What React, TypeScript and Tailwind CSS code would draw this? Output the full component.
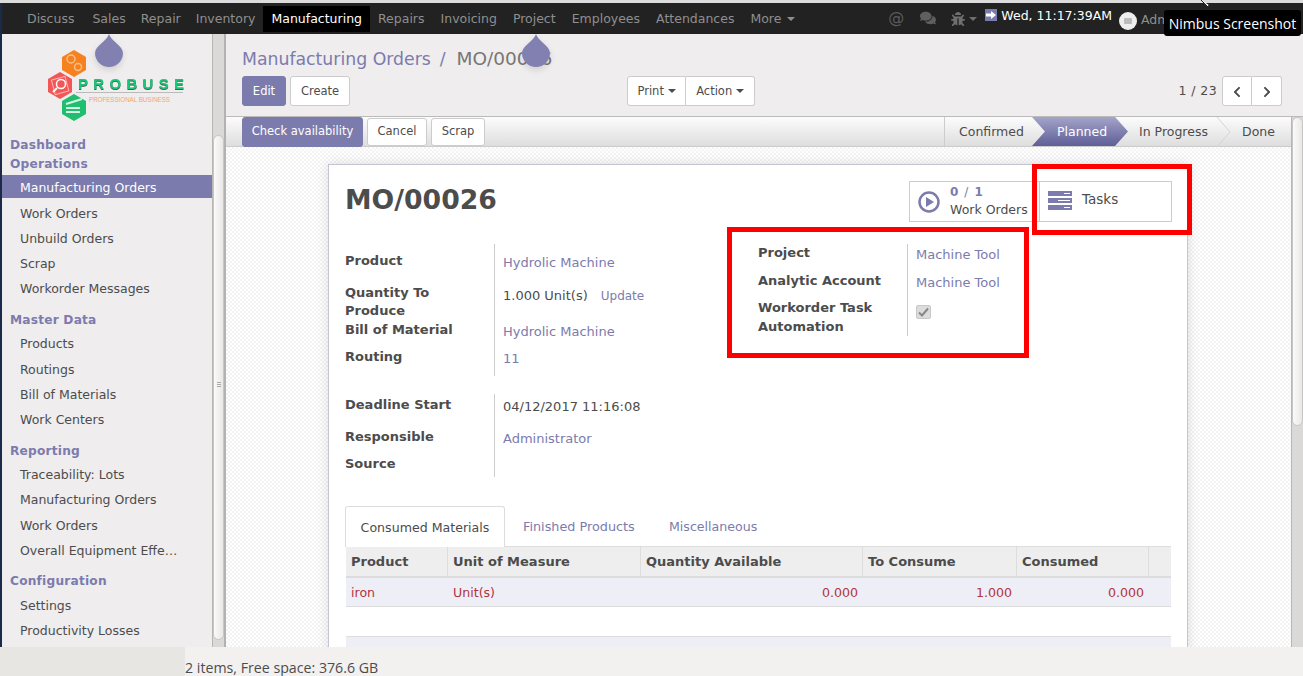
import React from 'react';
import { FaBug, FaChevronLeft, FaChevronRight, FaComments } from 'react-icons/fa';

const font = "font-['DejaVu_Sans',sans-serif]";

const navItems = ['Discuss', 'Sales', 'Repair', 'Inventory', 'Manufacturing', 'Repairs', 'Invoicing', 'Project', 'Employees', 'Attendances'];

const navPad: Record<string, string> = {
  Discuss: 'pl-2 pr-[10px]',
  Sales: 'pl-2 pr-[7px]',
  Repair: 'pl-2 pr-[7px]',
};

const Caret = ({ className = 'border-t-[#8f8f8f]' }: { className?: string }) => (
  <span className={`inline-block w-0 h-0 border-x-4 border-t-4 border-x-transparent align-middle ${className}`} />
);

const Drop = ({ className }: { className: string }) => (
  <svg className={`absolute top-[33px] drop-shadow-md ${className}`} width="30" height="35" viewBox="0 0 30 35">
    <path d="M15 1 C17 8 29 13 29 20 A14 14 0 0 1 1 20 C1 13 13 8 15 1Z" fill="#8180b0" />
  </svg>
);

const Logo = () => (
  <svg width="150" height="76" viewBox="0 0 150 76" className="block">
    <polygon points="26,1 38,8 38,21 26,28 14,21 14,8" fill="#f5821f" />
    <circle cx="23" cy="10" r="4" fill="none" stroke="#fbbf85" strokeWidth="1.5" />
    <circle cx="30" cy="18" r="3.5" fill="none" stroke="#fbbf85" strokeWidth="1.5" />
    <polygon points="12,23 24,30 24,43 12,50 0,43 0,30" fill="#f25757" />
    <rect x="5" y="29" width="14" height="15" fill="none" stroke="#ffb3b3" strokeWidth="1" transform="rotate(-15 12 36)" />
    <circle cx="13" cy="35" r="4.5" fill="none" stroke="#fff" strokeWidth="1.5" />
    <line x1="9" y1="39" x2="5" y2="43" stroke="#fff" strokeWidth="2" />
    <polygon points="26,45 38,52 38,65 26,72 14,65 14,52" fill="#1fbf6f" />
    <path d="M18 55 L34 50 M18 59 H32 M18 63 H32" stroke="#d6f5e5" strokeWidth="2" />
    <text x="30" y="40" fill="#18c878" fontSize="15" fontWeight="700" letterSpacing="5.3" className="font-['Liberation_Sans',sans-serif] [filter:drop-shadow(0_1px_0_#555)]">PROBUSE</text>
    <line x1="28" y1="43.5" x2="135" y2="43.5" stroke="#bbb" strokeWidth="1" />
    <text x="41" y="53" textLength="81" lengthAdjust="spacingAndGlyphs" fill="#f5a85a" fontSize="7.5" className="font-['Liberation_Sans',sans-serif]">PROFESSIONAL BUSINESS</text>
  </svg>
);

const SideHead = ({ children, className = '' }: { children: React.ReactNode; className?: string }) => (
  <div className={`h-[19px] leading-[21px] pl-[8px] text-[#7c7bad] font-bold text-[12.2px] tracking-[0.2px] ${className}`}>{children}</div>
);

const SideItem = ({ children, className = '' }: { children: React.ReactNode; className?: string }) => (
  <div className={`h-[25px] leading-[25px] pl-[18px] text-[#4c4c4c] text-[12.5px] whitespace-nowrap ${className}`}>{children}</div>
);

const Btn = ({ children, className = '' }: { children: React.ReactNode; className?: string }) => (
  <button className={`h-[30px] pt-[1px] bg-white border border-[#ccc] rounded-[3px] text-[11.5px] text-[#4c4c4c] ${className}`}>{children}</button>
);

const Row = ({ label, value, h, lt = 0, vt = 2, link = true, w = 'w-[149px]' }: { label: React.ReactNode; value?: React.ReactNode; h: number; lt?: number; vt?: number; link?: boolean; w?: string }) => (
  <div className="flex" style={{ height: h }}>
    <div className={`${w} shrink-0 font-bold text-[#4c4c4c] leading-[18px] pr-2`} style={{ paddingTop: lt }}>{label}</div>
    <div className={`flex-1 border-l border-[#ccc] pl-[8px] leading-[18px] whitespace-nowrap ${link ? 'text-[#7c7bad]' : 'text-[#4c4c4c]'}`} style={{ paddingTop: vt }}>{value}</div>
  </div>
);

export default function App() {
  return (
    <div className={`relative h-[676px] w-[1303px] overflow-hidden flex flex-col bg-[#f2f1f0] ${font} text-[13px]`}>
      <div className="h-[3px] bg-[#dcdcdc] shrink-0" />
      <div className="flex-1 min-h-0 flex bg-[#1c2a4a] pl-[2px]">
        <div className="flex-1 min-w-0 flex flex-col bg-[#efedee]">
          {/* top nav */}
          <nav className="h-[31px] shrink-0 bg-[#222] flex items-center pl-[17px] pt-[1px] text-[#8f8f8f] text-[12.5px]">
            {navItems.map(n => (
              <div key={n} className={n === 'Manufacturing' ? 'h-[26px] leading-[26px] px-2 bg-black text-white' : `${navPad[n] ?? 'px-2'} leading-[26px]`}>{n}</div>
            ))}
            <div className="px-2 whitespace-nowrap">More <Caret className="border-t-[#8f8f8f] ml-[2px]" /></div>
            <div className="ml-auto flex items-center pr-[139px] h-full">
              <span className="text-[16px] text-[#5a5a5a] mr-[16px] -mt-[3px]">@</span>
              <FaComments size={16} color="#5f5f5f" className="mr-[15px] -mt-[3px]" />
              <FaBug size={14} color="#6f6f6f" className="mr-[4px]" />
              <Caret className="border-t-[#6f6f6f] mr-[8px]" />
              <div className="flex items-start self-start pt-[4px] text-white leading-[16px] whitespace-nowrap">
                <svg width="12" height="12" viewBox="0 0 12 12" className="mr-[4px] mt-[1px]">
                  <rect width="12" height="12" fill="#7c7bad" />
                  <path d="M1 4.5h5V2l5 4-5 4V7.5H1z" fill="#fff" />
                </svg>
                Wed, 11:17:39AM
              </div>
              <span className="w-[18px] h-[18px] rounded-full bg-[#eee] ml-[7px] mr-[4px] mt-[3px] flex items-center justify-center">
                <span className="w-[8px] h-[6px] bg-[#bbb] rounded-[1px]" />
              </span>
              <span className="text-[#8f8f8f] mt-[3px] w-[23px] overflow-hidden">Adm</span>
            </div>
          </nav>

          <div className="flex-1 min-h-0 flex">
            {/* sidebar */}
            <aside className="w-[224px] shrink-0 flex">
              <div className="w-[210px] shrink-0">
                <div className="h-[101px] pl-[46px] pt-[15px]"><Logo /></div>
                <SideHead>Dashboard</SideHead>
                <SideHead className="mb-[2px]">Operations</SideHead>
                <div className="h-[23px] leading-[25px] pl-[18px] bg-[#7c7bad] text-white text-[12.5px] mb-[3px]">Manufacturing Orders</div>
                <SideItem>Work Orders</SideItem>
                <SideItem>Unbuild Orders</SideItem>
                <SideItem>Scrap</SideItem>
                <SideItem>Workorder Messages</SideItem>
                <SideHead className="mt-[9px] mb-[2px]">Master Data</SideHead>
                <SideItem className="mb-[1px]">Products</SideItem>
                <SideItem>Routings</SideItem>
                <SideItem>Bill of Materials</SideItem>
                <SideItem>Work Centers</SideItem>
                <SideHead className="mt-[9px] mb-[2px]">Reporting</SideHead>
                <SideItem>Traceability: Lots</SideItem>
                <SideItem className="mb-[1px]">Manufacturing Orders</SideItem>
                <SideItem>Work Orders</SideItem>
                <SideItem>Overall Equipment Effe…</SideItem>
                <SideHead className="mt-[8px] mb-[3px]">Configuration</SideHead>
                <SideItem>Settings</SideItem>
                <SideItem>Productivity Losses</SideItem>
              </div>
              <div className="flex-1 flex bg-[#dbd9d7] border-l border-[#b8b6b4] pt-[101px]">
                <div className="flex-1 h-[505px] bg-gradient-to-r from-[#fbfaf9] to-[#e9e8e6] border border-[#c8c6c4] rounded-full flex flex-col items-center pt-[246px] gap-[1px]">
                  <span className="w-[4px] h-[1px] bg-[#aaa]" />
                  <span className="w-[4px] h-[1px] bg-[#aaa]" />
                  <span className="w-[4px] h-[1px] bg-[#aaa]" />
                </div>
                <div className="w-[2px] bg-[#b4b2b0] -mt-[101px]" />
              </div>
            </aside>

            {/* main */}
            <main className="flex-1 min-w-0 flex flex-col">
              <div className="h-[83px] shrink-0 px-[16px] pt-[13px] border-b border-[#bbb]">
                <div className="text-[17.3px] leading-[24px] whitespace-nowrap">
                  <span className="text-[#7c7bad]">Manufacturing Orders</span>
                  <span className="text-[#7c7bad] ml-[9px]">/</span>
                  <span className="text-[#777] text-[18.5px] ml-[11px]">MO/00026</span>
                </div>
                <div className="flex mt-[5px] relative">
                  <Btn className="!bg-[#7c7bad] !border-[#7c7bad] !text-white w-[44px]">Edit</Btn>
                  <Btn className="w-[60px] ml-[4px]">Create</Btn>
                  <div className="flex ml-[277px]">
                    <Btn className="w-[59px] rounded-r-none">Print <Caret className="border-t-[#4c4c4c]" /></Btn>
                    <Btn className="w-[69px] rounded-l-none border-l-0">Action <Caret className="border-t-[#4c4c4c]" /></Btn>
                  </div>
                  <div className="flex items-center ml-auto mr-[5px]">
                    <span className="text-[#4c4c4c] text-[12.5px] mr-[5px] tracking-[0.4px]">1 / 23</span>
                    <Btn className="w-[30px] rounded-r-none flex items-center justify-center"><FaChevronLeft size={12} color="#4c4c4c" /></Btn>
                    <Btn className="w-[30px] rounded-l-none border-l-0 flex items-center justify-center"><FaChevronRight size={12} color="#4c4c4c" /></Btn>
                  </div>
                </div>
              </div>

              <div className="flex-1 min-h-0 flex">
                <div className="flex-1 min-w-0 flex flex-col">
                  {/* status bar */}
                  <div className="h-[30px] shrink-0 flex items-center pl-[16px] bg-gradient-to-b from-[#fcfcfc] to-[#dedede] border-b border-[#ccc]">
                    <Btn className="!bg-[#7c7bad] !border-[#7c7bad] !text-white w-[121px]">Check availability</Btn>
                    <Btn className="w-[60px] ml-[4px] !h-[28px]">Cancel</Btn>
                    <Btn className="w-[54px] ml-[4px] !h-[28px]">Scrap</Btn>
                    <div className="ml-auto flex h-full text-[#4c4c4c] text-[12.5px] border-l border-[#ccc]">
                      <div className="w-[87px] pl-[14px] leading-[29px]">Confirmed</div>
                      <div className="w-[96px] pl-[25px] leading-[29px] text-white bg-gradient-to-b from-[#a5a4c9] to-[#5f5e97] [clip-path:polygon(0_100%,13.5%_50%,0_0,86.5%_0,100%_50%,86.5%_100%)]">Planned</div>
                      <div className="relative w-[103px] pl-[11px] leading-[29px] whitespace-nowrap">In Progress
                        <svg className="absolute right-0 top-0" width="15" height="30" viewBox="0 0 15 30"><path d="M1 0l13 15L1 30" fill="none" stroke="#d4d4d4" /></svg>
                      </div>
                      <div className="w-[60px] pl-[11px] leading-[29px]">Done</div>
                    </div>
                  </div>
                  {/* sheet */}
                  <div className="flex-1 min-h-0 overflow-hidden pl-[102px] pt-[17px] pr-[103px] bg-[#fbfbfb] [background-image:repeating-conic-gradient(#f3f3f3_0_25%,#ffffff_0_50%)] [background-size:4px_4px]">
                    <div className="relative h-[600px] bg-white border border-[#c4c4d2] shadow-[0_0_12px_rgba(0,0,0,0.12)] px-[16px]">
                      <div className="flex justify-end pt-[16px] h-[79px] relative -mr-[1px]">
                        <h1 className="absolute left-0 top-[18px] text-[26.7px] leading-[34px] font-bold text-[#4c4c4c]">MO/00026</h1>
                        <div className="w-[131px] h-[41px] border border-[#ccc] flex items-center pl-[8px]">
                          <svg width="22" height="22" viewBox="0 0 22 22" className="mr-[10px] shrink-0">
                            <circle cx="11" cy="11" r="9.5" fill="none" stroke="#7c7bad" strokeWidth="2.5" />
                            <path d="M8 6l8 5-8 5z" fill="#7c7bad" />
                          </svg>
                          <div className="leading-[18px] pb-[2px]">
                            <div className="text-[#7c7bad] font-bold text-[12px]">0<span className="font-normal mx-[6px]">/</span>1</div>
                            <div className="text-[#4c4c4c] text-[12.5px] whitespace-nowrap">Work Orders</div>
                          </div>
                        </div>
                        <div className="w-[132px] h-[41px] border border-l-0 border-[#ccc] flex items-center pl-[8px] pb-[3px]">
                          <svg width="24" height="19" viewBox="0 0 24 19" className="mr-[10px] shrink-0">
                            <rect width="24" height="5" fill="#7c7bad" />
                            <rect y="7" width="24" height="5" fill="#7c7bad" />
                            <rect y="14" width="24" height="5" fill="#7c7bad" />
                            <path d="M16 2.5h6M10 9.5h12M16 16.5h6" stroke="#fff" strokeWidth="1" />
                          </svg>
                          <span className="text-[#4c4c4c] text-[13.5px] -mt-[1px]">Tasks</span>
                        </div>
                      </div>

                      <div className="flex">
                        <div className="w-[413px] shrink-0">
                          <Row h={40} lt={8} vt={10} label="Product" value="Hydrolic Machine" />
                          <Row h={37} vt={3} label="Quantity To Produce" link={false} value={<>1.000 Unit(s)<span className="text-[#7c7bad] text-[12px] ml-[13px]">Update</span></>} />
                          <Row h={27} label="Bill of Material" value="Hydrolic Machine" />
                          <Row h={28} label="Routing" value="11" />
                          <div className="h-[18px]" />
                          <Row h={34} lt={2} vt={4} label="Deadline Start" link={false} value="04/12/2017 11:16:08" />
                          <Row h={27} label="Responsible" value="Administrator" />
                          <Row h={22} label="Source" />
                        </div>
                        <div className="w-[246px] shrink-0">
                          <Row h={28} label="Project" value="Machine Tool" />
                          <Row h={27} label="Analytic Account" value="Machine Tool" />
                          <Row h={37} label={<div className="leading-[19px] -mt-[1px]">Workorder Task Automation</div>} value={
                            <span className="mt-[4px] w-[15px] h-[14px] rounded-[2px] bg-[#dcdcdc] border border-[#c8c8c8] flex items-center justify-center">
                              <svg width="13" height="11" viewBox="0 0 13 11"><path d="M2 5.5l3 3 6-7" fill="none" stroke="#888" strokeWidth="2" /></svg>
                            </span>
                          } />
                        </div>
                      </div>

                      {/* notebook */}
                      <div className="flex mt-[29px] h-[41px] border-b border-[#ddd] text-[12.6px]">
                        <div className="h-[41px] w-[160px] bg-white border border-b-0 border-[#ddd] rounded-t-[3px] flex items-center justify-center text-[#4c4c4c] leading-[41px]">Consumed Materials</div>
                        <div className="ml-[18px] w-[112px] leading-[41px] text-[#7c7bad] text-[12.8px] whitespace-nowrap">Finished Products</div>
                        <div className="ml-[34px] leading-[41px] text-[#7c7bad] whitespace-nowrap">Miscellaneous</div>
                      </div>
                      <div className="ml-[1px] grid grid-cols-[102px_193px_222px_154px_132px_23px] h-[31px] bg-[#eeeeee] border-b-[2px] border-[#dcdcdc] font-bold text-[#4c4c4c] leading-[29px]">
                        <div className="pl-[5px] border-r border-[#ddd]">Product</div>
                        <div className="pl-[5px] border-r border-[#ddd]">Unit of Measure</div>
                        <div className="pl-[5px] border-r border-[#ddd]">Quantity Available</div>
                        <div className="pl-[5px] border-r border-[#ddd]">To Consume</div>
                        <div className="pl-[5px] border-r border-[#ddd]">Consumed</div>
                        <div />
                      </div>
                      <div className="ml-[1px] grid grid-cols-[102px_193px_222px_154px_132px_23px] h-[29px] bg-[#eeeef7] border-b border-[#ddd] text-[#b0343c] text-[12.6px] leading-[29px]">
                        <div className="pl-[5px]">iron</div>
                        <div className="pl-[5px]">Unit(s)</div>
                        <div className="pr-[5px] text-right">0.000</div>
                        <div className="pr-[5px] text-right">1.000</div>
                        <div className="pr-[5px] text-right">0.000</div>
                        <div />
                      </div>
                      <div className="h-[29px]" />
                      <div className="ml-[1px] h-[29px] bg-[#eeeef7] border-t border-[#ddd]" />
                    </div>
                  </div>
                </div>
                {/* main scrollbar */}
                <div className="w-[12px] shrink-0 bg-[#dbd9d7] border-l border-[#b8b6b4]">
                  <div className="h-[309px] bg-gradient-to-r from-[#fbfaf9] to-[#e9e8e6] border border-[#c8c6c4] rounded-full" />
                </div>
              </div>
            </main>
          </div>
        </div>
      </div>

      {/* bottom file manager strip */}
      <div className="h-[29px] shrink-0 flex">
        <div className="w-[185px] bg-[#e8e6e3]" />
        <div className="flex-1 bg-[#f2f1f0] font-['Open_Sans',sans-serif] text-[14.2px] leading-[42px] text-[#4c4c4c] whitespace-nowrap">2 items, Free space: 376.6 GB</div>
      </div>

      {/* overlays */}
      <Drop className="left-[94px]" />
      <Drop className="left-[521px]" />
      <div className="absolute left-[1032px] top-[164px] w-[160px] h-[71px] border-[5px] border-[#f00]" />
      <div className="absolute left-[727px] top-[227px] w-[302px] h-[131px] border-[5px] border-[#f00]" />
      <div className="absolute left-[1164px] top-[10px] w-[137px] h-[26px] bg-black rounded-[3px] text-white font-['Open_Sans',sans-serif] text-[14px] leading-[28px] text-center whitespace-nowrap">Nimbus Screenshot</div>
      <svg className="absolute left-[1200px] top-0" width="14" height="8" viewBox="0 0 14 8">
        <path d="M1 0l7 7 1-2 3 2" fill="#fff" stroke="#222" strokeWidth="1" />
      </svg>
    </div>
  );
}
